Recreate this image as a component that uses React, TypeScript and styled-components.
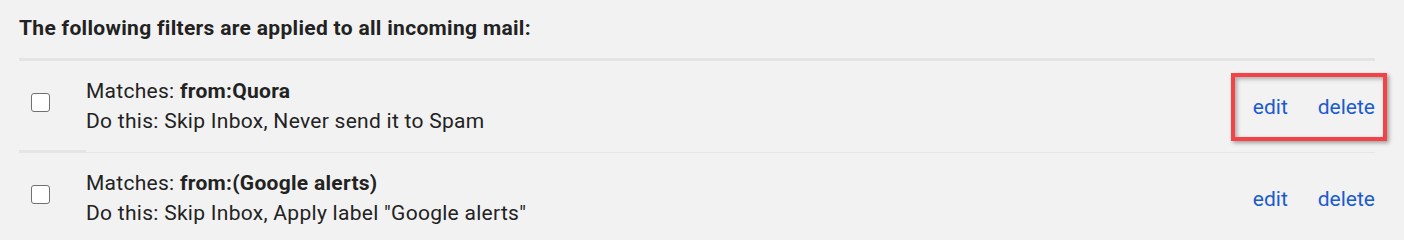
import React from "react";
import styled, { createGlobalStyle } from "styled-components";

const Global = createGlobalStyle`
  html, body {
    margin: 0;
    padding: 0;
    background: #f2f2f2;
  }
  body {
    font-family: Roboto, "Liberation Sans", Arial, sans-serif;
    color: #222222;
  }
`;

const Page = styled.div`
  padding: 13px 29px 0 19px;
`;

const Heading = styled.div`
  font-size: 21px;
  font-weight: 700;
  line-height: 30px;
  letter-spacing: 0.31px;
  margin-bottom: 15px;
  color: #222222;
`;

const Table = styled.div`
  border-top: 3px solid #e4e4e4;
  display: grid;
  grid-template-columns: 67px 1fr auto;
`;

const CheckCell = styled.div`
  padding: 32px 0 0 12px;
  border-bottom: 3px solid #e5e5e5;
`;

const Checkbox = styled.span`
  display: block;
  box-sizing: border-box;
  width: 19px;
  height: 19px;
  border: 1.5px solid #707070;
  border-radius: 3px;
  background: #ffffff;
`;

const TextCell = styled.div`
  padding: 15px 0 16px;
  border-bottom: 1px solid #e6e6e6;
  font-size: 21px;
  line-height: 30px;
  letter-spacing: 0.28px;
  color: #222222;
`;

const Line = styled.div`
  white-space: nowrap;
`;

const Bold = styled.b`
  font-weight: 700;
`;

const ActionCell = styled.div`
  display: flex;
  align-items: center;
  justify-content: flex-end;
  border-bottom: 1px solid #e6e6e6;
`;

const Links = styled.div`
  position: relative;
  display: flex;
  gap: 30px;
  font-size: 21px;
  line-height: 30px;
`;

const Link = styled.a`
  color: #1a5bd1;
  text-decoration: none;
  cursor: pointer;
`;

const Highlight = styled.div`
  position: absolute;
  left: -22px;
  right: -12px;
  top: -19px;
  bottom: -19px;
  border: 4px solid #f44346;
  box-shadow: 2px 2px 4px rgba(0, 0, 0, 0.35),
    inset 2px 2px 4px rgba(0, 0, 0, 0.3);
  pointer-events: none;
`;

type Filter = {
  match: string;
  action: string;
  highlighted?: boolean;
};

const filters: Filter[] = [
  {
    match: "from:Quora",
    action: "Skip Inbox, Never send it to Spam",
    highlighted: true,
  },
  {
    match: "from:(Google alerts)",
    action: 'Skip Inbox, Apply label "Google alerts"',
  },
];

export default function App() {
  return (
    <>
      <Global />
      <Page>
        <Heading>The following filters are applied to all incoming mail:</Heading>
        <Table>
          {filters.map((f) => (
            <React.Fragment key={f.match}>
              <CheckCell>
                <Checkbox role="checkbox" aria-checked="false" />
              </CheckCell>
              <TextCell>
                <Line>
                  Matches: <Bold>{f.match}</Bold>
                </Line>
                <Line>Do this: {f.action}</Line>
              </TextCell>
              <ActionCell>
                <Links>
                  <Link>edit</Link>
                  <Link>delete</Link>
                  {f.highlighted && <Highlight />}
                </Links>
              </ActionCell>
            </React.Fragment>
          ))}
        </Table>
      </Page>
    </>
  );
}
